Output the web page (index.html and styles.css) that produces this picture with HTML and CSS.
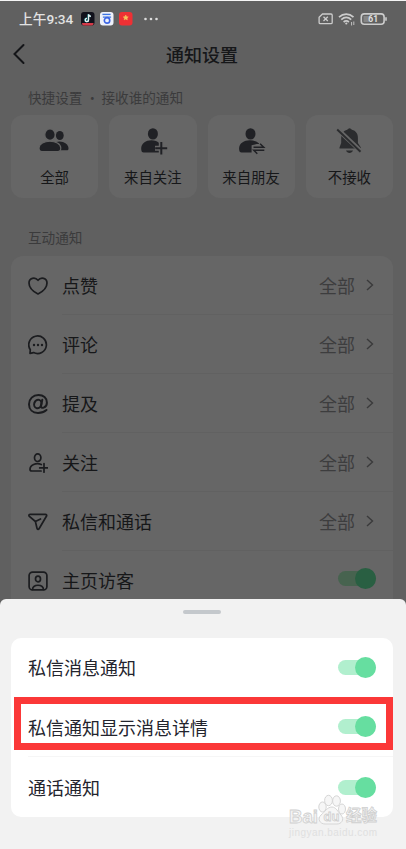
FILE: index.html
```html
<!DOCTYPE html>
<html lang="zh-CN">
<head>
<meta charset="utf-8">
<title>通知设置</title>
<link rel="stylesheet" href="styles.css">
</head>
<body>
<div class="phone">
  <div class="status">
    <span class="time">上午9:34</span>
    <svg class="app" viewBox="0 0 14 14"><rect width="14" height="14" rx="3" fill="#11111b"/><path d="M7.6 2.3v6a1.7 1.7 0 1 1-1.7-1.7M7.6 2.5c.3 1.3 1.2 2 2.4 2.1" fill="none" stroke="#48c8cc" stroke-width="1.7"/><path d="M7.9 2.3v6a1.7 1.7 0 1 1-1.7-1.7M7.9 2.5c.3 1.3 1.2 2 2.4 2.1" fill="none" stroke="#eee" stroke-width="1.2"/><path d="M1 11.3h12c0 2-1 2.7-3 2.7H4c-2 0-3-.7-3-2.7z" fill="#d63a48"/></svg>
    <svg class="app" viewBox="0 0 14 14"><rect width="14" height="14" rx="3" fill="#eef1fa"/><path d="M2.5 2.5h8.500" stroke="#3b74e4" stroke-width="1.4"/><path d="M3 5.300h8.500" stroke="#3b74e4" stroke-width="1.300"/><circle cx="7.300" cy="8.700" r="2.800" fill="none" stroke="#3b64e4" stroke-width="1.700"/></svg>
    <svg class="app" viewBox="0 0 14 14"><rect width="14" height="14" rx="3" fill="#ee3034"/><path d="M7 3.2l.8 1.700 1.800.2-1.300 1.200.3 1.800L7 7.200l-1.600.9.3-1.800-1.300-1.200 1.800-.2z" fill="#f6c35a" stroke="#f6c35a" stroke-width=".6"/></svg>
    <svg class="more" viewBox="0 0 16 4"><g fill="#ddd"><circle cx="2.5" cy="2" r="1.3"/><circle cx="8" cy="2" r="1.3"/><circle cx="13.5" cy="2" r="1.3"/></g></svg>
    <svg class="signals" viewBox="0 0 70 16" fill="none" stroke="#ccc" stroke-width="1.3">
      <path d="M4.500 3H13a1.200 1.200 0 0 1 1.200 1.200v7.300a1.200 1.200 0 0 1-1.200 1.200H2.300a1.200 1.200 0 0 1-1.200-1.200V6.200zM5.500 5.700l4.300 4.300M9.800 5.700L5.500 10"/>
      <path d="M21 6.200c4.300-4 10.200-4 14.500 0M23.300 8.700c3-2.700 6.900-2.700 9.900 0M25.600 11c1.700-1.400 3.600-1.400 5.300 0" stroke-width="1.700"/><circle cx="28.300" cy="12.500" r="1.100" fill="#ccc" stroke="none"/><path d="M33.600 11v3.500M35.800 10.500V14" stroke-width=".9"/>
      <rect x="43.300" y="2.900" width="22.800" height="10.400" rx="3" stroke-width="1.600"/><path d="M68 6.300v3.500" stroke-width="1.600"/><path d="M45.500 5h6v6.200h-6z" fill="#858585" stroke="none"/>
      <text x="50.300" y="11.200">61</text>
    </svg>
  </div>
  <header class="nav">
    <svg viewBox="0 0 14 22"><path d="M11.500 2L2.500 11l9 9"/></svg>
    <h1>通知设置</h1>
  </header>
  <h2 class="section first">快捷设置 <i>·</i> 接收谁的通知</h2>
  <div class="quick">
    <div class="tile"><svg viewBox="0 0 32 30"><g fill="#202125"><ellipse cx="20.800" cy="9.500" rx="3.900" ry="4.500"/><path d="M17 16c6-2 12.500 1.500 12.500 6.500 0 1.300-.5 1.800-1.800 1.800H20z"/><g stroke="#666" stroke-width="1.200"><ellipse cx="11" cy="8.700" rx="5.200" ry="5.700"/><path d="M0 22c0-9 21.800-9 21.800 0 0 2.700-.8 3.600-3 3.600H3c-2.200 0-3-.9-3-3.600z"/></g></g></svg><span>全部</span></div>
    <div class="tile"><svg viewBox="0 0 32 30"><g fill="#202125"><ellipse cx="15.900" cy="7.900" rx="5" ry="5.700"/><path d="M4.200 23c-.5-9 13-11.500 18.500-5.500v9H6.700c-1.700 0-2.400-1-2.500-3.500z"/></g><path d="M24.300 15.800v12.800M18 22.200h12.600" stroke="#666" stroke-width="5"/><path d="M24.300 16v12.500M18.200 22.200h12" stroke="#202125" stroke-width="2"/></svg><span>来自关注</span></div>
    <div class="tile"><svg viewBox="-3.300 0 32 30"><g fill="#202125"><ellipse cx="12.200" cy="7.900" rx="5" ry="5.700"/><path d="M.8 23c-.5-9 13-11.500 20-5.500v9H3.300c-1.700 0-2.400-1-2.500-3.500z"/></g><path d="M13.300 19.300l5-1.300h8v10h-13z" fill="#666"/><path d="M15.200 21.200h10.200l-3.600-3.500M26 24.300H15.500l3.500 3.500" fill="none" stroke="#202125" stroke-width="1.500"/></svg><span>来自朋友</span></div>
    <div class="tile"><svg viewBox="0 0 32 30"><path d="M8.200 13c0-6 2.500-8.300 6-9.200 1.400-2 3.300-2 4.700 0 4 .9 6 4 6 8.300v5l3 4.500v1H6.500v-1l1.700-4.500zM13 24.500h7c-1 3.200-6 3.200-7 0z" fill="#2b2c2e"/><path d="M4.800 3.500L28 25.300" stroke="#666" stroke-width="4.500"/><path d="M4.200 3.500L27.500 25.800" stroke="#2b2c2e" stroke-width="1.900"/></svg><span>不接收</span></div>
  </div>
  <h2 class="section second">互动通知</h2>
  <div class="list">
    <div class="row"><svg class="icon" viewBox="0 0 20 20"><path d="M10 18C6 16 1 12 1 7c0-5 6-6.500 9-2.700C13 .5 19 2 19 7c0 5-5 9-9 11z"/></svg><div class="line"><span>点赞</span><em>全部</em><svg class="chev" viewBox="0 0 8 12"><path d="M1 1l5.500 5L1 11"/></svg></div></div>
    <div class="row"><svg class="icon" viewBox="0 0 20 20"><path d="M2 18.400l.3-3.700a8.800 8.800 0 1 1 3.300 2.900z"/><g class="solid"><circle cx="6" cy="10" r="1.200"/><circle cx="10" cy="10" r="1.200"/><circle cx="14" cy="10" r="1.200"/></g></svg><div class="line"><span>评论</span><em>全部</em><svg class="chev" viewBox="0 0 8 12"><path d="M1 1l5.500 5L1 11"/></svg></div></div>
    <div class="row"><svg class="icon at" viewBox="0 0 20 20"><ellipse cx="9.800" cy="10" rx="3.600" ry="4.300" transform="rotate(18 9.800 10)"/><path d="M14.300 5.800l-1.400 6.300c-.5 3 5.900 2.200 6-3.400C19 4 15.300 1 10.500 1 5 1 1 5 1 10.200 1 15.600 4.700 19 10 19c3.500 0 6-.9 8.500-3"/></svg><div class="line"><span>提及</span><em>全部</em><svg class="chev" viewBox="0 0 8 12"><path d="M1 1l5.500 5L1 11"/></svg></div></div>
    <div class="row"><svg class="icon" viewBox="0 0 20 20"><ellipse cx="9.700" cy="4.700" rx="3.200" ry="3.800"/><path d="M13.300 11.500C8 9.300 2 12 2 16.200c0 1.300.5 1.800 1.800 1.800h9.300M16 10.600v8.600M11.700 14.900h8"/></svg><div class="line"><span>关注</span><em>全部</em><svg class="chev" viewBox="0 0 8 12"><path d="M1 1l5.500 5L1 11"/></svg></div></div>
    <div class="row"><svg class="icon" viewBox="0 0 20 20"><path d="M2.500 2.300h14.800c1.200 0 1.700.9 1.100 2l-7.200 12.200c-.7 1.200-1.900 1.100-2.200-.2L7.400 9.500l-6-5.100c-.9-1-.5-2.100 1.100-2.100zM7.400 9.500L12.500 7"/></svg><div class="line"><span>私信和通话</span><em>全部</em><svg class="chev" viewBox="0 0 8 12"><path d="M1 1l5.500 5L1 11"/></svg></div></div>
    <div class="row"><svg class="icon" viewBox="0 0 20 20"><rect x="1.100" y="1.100" width="17.800" height="17.800" rx="3.500"/><ellipse cx="10" cy="8" rx="2.500" ry="2.900"/><path d="M4.500 18.500c.5-5.700 10.500-5.700 11 0"/></svg><div class="line"><span>主页访客</span><b class="toggle dim"></b></div></div>
  </div>
  <div class="sheet">
    <div class="grip"></div>
    <div class="panel">
      <div class="option"><span>私信消息通知</span><b class="toggle"></b></div>
      <div class="option"><span>私信通知显示消息详情</span><b class="toggle"></b></div>
      <div class="option"><span>通话通知</span><b class="toggle"></b></div>
    </div>
  </div>
  <div class="highlight"></div>
  <svg class="mark" viewBox="0 0 94 50">
    <g fill="#f6f6f6" stroke="#d6d6d6"><ellipse cx="34.500" cy="16" rx="3.700" ry="5"/><ellipse cx="40.500" cy="9.500" rx="3.900" ry="5.200"/><ellipse cx="48.500" cy="10" rx="3.900" ry="5.200"/><ellipse cx="54" cy="18" rx="3.500" ry="5"/><path d="M44 16c4 0 6 5 9 8 4 5 0 9-4 9H37c-5 0-8-5-4-9 4-3 6-8 11-8z"/></g>
    <g class="brand"><text x="1" y="31.500" textLength="29" lengthAdjust="spacingAndGlyphs">Bai</text><text x="58" y="30" class="cn">经验</text></g>
    <text x="35.500" y="30" class="du">du</text>
    <text x="1" y="45" class="url" textLength="88">jingyan.baidu.com</text>
  </svg>
</div>
</body>
</html>
```
FILE: styles.css
```css
* { box-sizing: border-box; }
body { margin: 0; font-family: "Noto Sans CJK SC", sans-serif; color: #161719; }
.phone { position: relative; width: 406px; height: 849px; overflow: hidden; background: #606060; border-top: 1px solid #f4f4f4; }
svg { display: block; flex: none; fill: none; }
.status { display: flex; align-items: center; height: 36px; padding-left: 19px; color: #e2e2e2; }
.time { width: 54px; margin-right: 8px; font: 500 13.7px/20px Roboto, "Noto Sans CJK SC", sans-serif; white-space: nowrap; }
.app { width: 13.5px; height: 13.5px; margin-right: 5.7px; }
.more { width: 16px; height: 4px; margin-left: 4px; }
.signals { width: 70px; height: 16px; margin-left: auto; margin-right: 18px; }
.signals text { font: bold 8.5px Roboto, sans-serif; fill: #e0e0e0; stroke: none; }
.nav { display: flex; align-items: center; height: 34px; padding-left: 12px; }
.nav svg { width: 14px; height: 22px; stroke: #141518; stroke-width: 2; stroke-linecap: round; }
.nav h1 { flex: 1; margin: 0 29px 0 1px; font-size: 18px; font-weight: 500; line-height: 26px; text-align: center; }
.section { margin: 0; padding-left: 28px; font-size: 13.6px; font-weight: 400; line-height: 20px; color: #3b3b3c; }
.section i { display: inline-block; width: 13px; font-style: normal; text-align: center; }
.first { padding: 16px 0 1px 28px; }
.second { padding: 29px 0 1px 28px; }
.quick { display: grid; grid-template-columns: repeat(4, 1fr); gap: 11px; margin: 7px 13px 0 11px; height: 83px; }
.tile { display: flex; flex-direction: column; align-items: center; padding-top: 11px; border-radius: 12px; background: #666; font-size: 14.4px; line-height: 20px; }
.tile svg { width: 32px; height: 30px; margin-bottom: 11px; }
.list { margin: 8px 13px 0 11px; border-radius: 12px 12px 0 0; background: #666; }
.row { display: flex; align-items: center; height: 59px; padding-left: 17px; font-size: 18px; }
.icon { width: 20px; height: 20px; margin-right: 14px; stroke: #1b1c1f; stroke-width: 1.7; stroke-linejoin: round; stroke-linecap: round; }
.at { stroke-width: 2; }
.solid { fill: #1b1c1f; stroke: none; }
.line { display: flex; flex: 1; align-items: center; height: 59px; padding-right: 19px; border-bottom: 1px solid #616161; }
.line span { margin-right: auto; }
.line em { font-style: normal; color: #3d3d3e; }
.chev { width: 8px; height: 12px; margin-left: 11px; stroke: #3a3a3b; stroke-width: 1.4; }
.toggle { display: flex; align-items: center; justify-content: flex-end; width: 38px; height: 15px; border-radius: 8px; background: #b1efce; }
.toggle::after { content: ""; width: 21px; height: 21px; flex: none; border-radius: 50%; background: #66dea0; }
.line .toggle { margin-right: -2px; margin-top: -3px; }
.line .dim { background: #47634f; }
.dim::after { background: #295f42; }
.sheet { position: absolute; inset: 598px 0 0; padding: 11px 13px 0 11px; border-radius: 6px 6px 0 0; background: #f2f2f2; color: #23242d; }
.grip { width: 38px; height: 4px; margin: 0 auto; border-radius: 2px; background: #c4c8cc; }
.panel { height: 179px; margin-top: 24px; border-radius: 10px; background: #fff; }
.option { display: flex; align-items: center; justify-content: space-between; height: 59.67px; margin-left: 17px; padding-right: 17px; border-bottom: 1px solid #f6f6f6; font-size: 18px; }
.option:last-child { border: 0; }
.highlight { position: absolute; left: 14px; top: 696px; width: 379px; height: 53px; border: 7px solid #fb3838; }
.mark { position: absolute; left: 288px; top: 790px; width: 94px; height: 50px; }
.brand text, .du { font: bold 19px "Liberation Sans", sans-serif; fill: #f5f5f5; stroke: #cfcfcf; stroke-width: .8; }
.brand .cn { font: 700 15.5px "Noto Sans CJK SC", sans-serif; }
.mark .du { font-size: 13px; }
.url { font: 10px "Liberation Sans", sans-serif; fill: #e0e0e0; }
```
